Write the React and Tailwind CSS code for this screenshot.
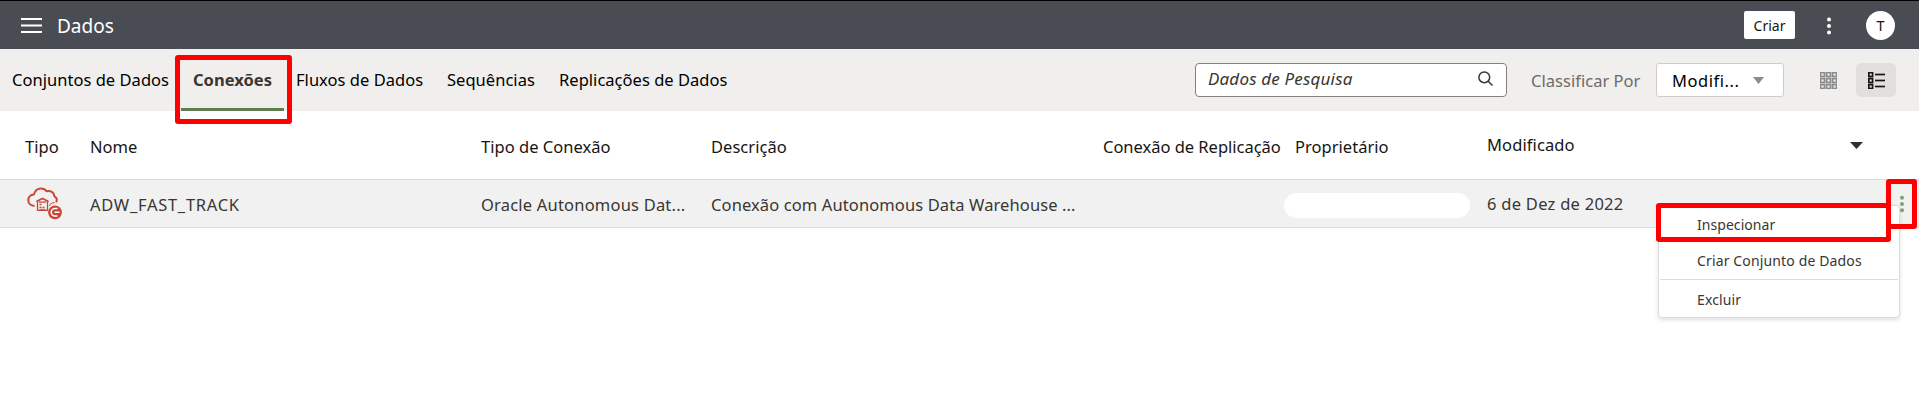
const tabs = [
  { label: 'Conjuntos de Dados', cls: 'w-[170px] pl-[12px]' },
  { label: 'Conexões', cls: 'w-[103px] ml-[11px] pl-[9px] border-b-3 border-[#5f7d4f] pt-[3px] font-bold text-[#3a3631]', active: true },
  { label: 'Fluxos de Dados', cls: 'ml-[12px] w-[151px]' },
  { label: 'Sequências', cls: 'w-[112px]' },
  { label: 'Replicações de Dados', cls: 'w-[180px]' },
];

const GRID = 'grid grid-cols-[25px_65px_391px_230px_392px_192px_192px_1fr]';

function ConnectionIcon() {
  return (
    <svg width="36" height="34" viewBox="0 0 36 34" fill="none" stroke="#c74634" strokeWidth="2">
      <path d="M7.500 19C4 18.800 1.300 16.600 1.300 13.300c0-3.200 2.300-5.600 5.600-5.800C7.800 4 10.400 1.400 14 1.400c2.400 0 4.300 1 5.500 2.800 4-1 7.600 1.200 8 5.100 2.300 1.300 2.900 3.600 1.600 6" strokeLinejoin="round" />
      <path d="M22 19c1-2 3-3.300 5.600-3.500" strokeWidth="1" />
      <path d="M9.500 14.500 15.500 11.500l6 3" strokeWidth="1.700" />
      <path d="M10.500 14v9.500M20.500 14v9.500M10 23.400h11" strokeWidth="1.300" />
      <path d="M12 15.200h7M12.500 17.500h2M12.500 20.500h2M15.500 20.500h2M12.500 23h6" strokeWidth="1.300" />
      <circle cx="28" cy="25.300" r="6.900" fill="#c74634" stroke="none" />
      <path d="M30.500 21.500h-2.500a3.800 3.800 0 0 0 0 7.600h2.500M27.500 25.300h5" stroke="#fff" strokeWidth="1.500" />
    </svg>
  );
}

function GridIcon() {
  return (
    <svg width="17" height="17" viewBox="0 0 17 17" fill="none" stroke="#8b8b8e" strokeWidth="1.700">
      {[0, 6, 12].map((y) => [0, 6, 12].map((x) => (
        <rect key={`${x}-${y}`} x={x + 0.6} y={y + 0.6} width="3.900" height="3.900" />
      )))}
    </svg>
  );
}

function ListIcon() {
  return (
    <svg width="17" height="17" viewBox="0 0 17 17" fill="none" stroke="#161513" strokeWidth="1.700">
      {[0, 6, 12].map((y) => (
        <g key={y}>
          <rect x="0.850" y={y + 0.6} width="3.700" height="3.900" />
          <path d={`M7 ${y + 2.5}H17`} />
        </g>
      ))}
    </svg>
  );
}

function Dots({ color, r, gap }) {
  return (
    <svg width="6" height="20" viewBox="0 0 6 20" fill={color}>
      <circle cx="3" cy={10 - gap} r={r} />
      <circle cx="3" cy="10" r={r} />
      <circle cx="3" cy={10 + gap} r={r} />
    </svg>
  );
}

function Caret({ color, w, h }) {
  return (
    <svg width={w} height={h} viewBox="0 0 12 7" preserveAspectRatio="none" fill={color}>
      <path d="M0 0h12L6 7z" />
    </svg>
  );
}

export default function App() {
  return (
    <div className="relative flex h-[407px] w-[1919px] flex-col overflow-hidden whitespace-nowrap bg-white font-['Noto_Sans',sans-serif] text-[16.5px] leading-6 tracking-[0.03px] text-[#161513]">
      <header className="flex h-[49px] shrink-0 items-center border-t border-black bg-[#4a4c54] pl-[21px] pr-[24px]">
        <svg width="21" height="15" viewBox="0 0 21 15" stroke="#fff" strokeWidth="1.800">
          <path d="M0 1h21M0 7.500h21M0 14h21" />
        </svg>
        <h1 className="ml-[15px] pt-px text-[19px] tracking-normal text-white">Dados</h1>
        <button className="ml-auto h-[28px] w-[51px] rounded-[2px] bg-white pt-[2px] text-[14px] leading-6 tracking-normal">Criar</button>
        <div className="ml-[31px] pt-px"><Dots color="#fff" r={2} gap={6.5} /></div>
        <div className="ml-[34px] flex h-[29px] w-[29px] items-center justify-center rounded-full bg-white text-[14.5px]">T</div>
      </header>

      <div className="flex h-[62px] shrink-0 items-center bg-[#f0efed] pr-[23px]">
        <nav className="flex h-full text-black">
          {tabs.map((t) => (
            <a key={t.label} className={`flex h-full items-center ${t.cls}`}>
              <span className={t.active ? 'pl-[3px]' : ''}>{t.label}</span>
            </a>
          ))}
        </nav>
        <div className="ml-auto flex h-[34px] w-[312px] items-center justify-between rounded-[4px] border border-[#84817d] bg-white pl-[12px] pr-[13px]">
          <span className="pb-[3px] text-[17px] italic tracking-[0.18px] text-[#3a3631]">Dados de Pesquisa</span>
          <svg width="15" height="15" viewBox="0 0 15 15" fill="none" stroke="#3a3631" strokeWidth="1.500" className="mb-[4px]">
            <circle cx="6.300" cy="6.300" r="5.400" />
            <path d="M10.200 10.200 14.500 14.500" />
          </svg>
        </div>
        <span className="ml-[24px] w-[125px] pt-px text-[#6f6b67]">Classificar Por</span>
        <div className="flex h-[34px] w-[128px] items-center justify-between rounded-[3px] border border-[#cfccc8] bg-white pl-[15px] pr-[19px] text-black">
          <span className="pt-px tracking-[0.55px]">Modifi...</span>
          <Caret color="#8b8b8e" w={11} h={7} />
        </div>
        <div className="ml-[36px]"><GridIcon /></div>
        <div className="ml-[19px] flex h-[34px] w-[40px] items-center justify-center rounded-[5px] bg-[#e2e0dc]"><ListIcon /></div>
      </div>

      <div className={`${GRID} h-[69px] shrink-0 items-center border-b border-[#d9dde1] pt-[3px]`}>
        <span />
        <span>Tipo</span>
        <span>Nome</span>
        <span>Tipo de Conexão</span>
        <span>Descrição</span>
        <span className="tracking-[-0.02px]">Conexão de Replicação</span>
        <span>Proprietário</span>
        <span className="flex items-center pb-[3px] pr-[56px] tracking-[0.1px]">
          Modificado
          <span className="ml-auto"><Caret color="#312d2a" w={13} h={7} /></span>
        </span>
      </div>

      <div className={`${GRID} h-[48px] shrink-0 items-center border-b border-[#dcdcdc] bg-[#f1f1f1] text-[#3a3631]`}>
        <span />
        <span className="pl-[2px] pt-[1px]"><ConnectionIcon /></span>
        <span className="pt-[2px] tracking-[0.72px]">ADW_FAST_TRACK</span>
        <span className="pt-[2px] tracking-[0.2px]">Oracle Autonomous Dat...</span>
        <span className="pt-[2px] tracking-[0.11px]">Conexão com Autonomous Data Warehouse ...</span>
        <span />
        <span className="ml-[-11px] mt-[4px] h-[25px] w-[186px] rounded-full bg-white" />
        <span className="tracking-[0.27px]">6 de Dez de 2022</span>
      </div>

      <div className="absolute left-[1658px] top-[205px] flex h-[113px] w-[242px] flex-col rounded-[4px] border border-[#dcdcdc] bg-white text-[14px] leading-5 tracking-[0.14px] text-[#3a3631] shadow-[0_2px_4px_rgba(0,0,0,0.12)]">
        <div className="pl-[38px] pt-[9px] tracking-[0.05px]">Inspecionar</div>
        <div className="mx-px mt-[16px] border-b border-[#dcdcdc] pb-[8px] pl-[37px]">Criar Conjunto de Dados</div>
        <div className="pl-[38px] pt-[10px]">Excluir</div>
      </div>
      <div className="absolute left-[1899px] top-[194px] flex"><Dots color="#7fa079" r={2} gap={6.3} /></div>

      <div className="absolute left-[175px] top-[55px] h-[69px] w-[117px] rounded-[3px] border-5 border-[#ff0000]" />
      <div className="absolute left-[1656px] top-[203px] h-[39px] w-[235px] rounded-[3px] border-5 border-[#ff0000]" />
      <div className="absolute left-[1886px] top-[179px] h-[50px] w-[31px] rounded-[3px] border-5 border-[#ff0000]" />
    </div>
  );
}
